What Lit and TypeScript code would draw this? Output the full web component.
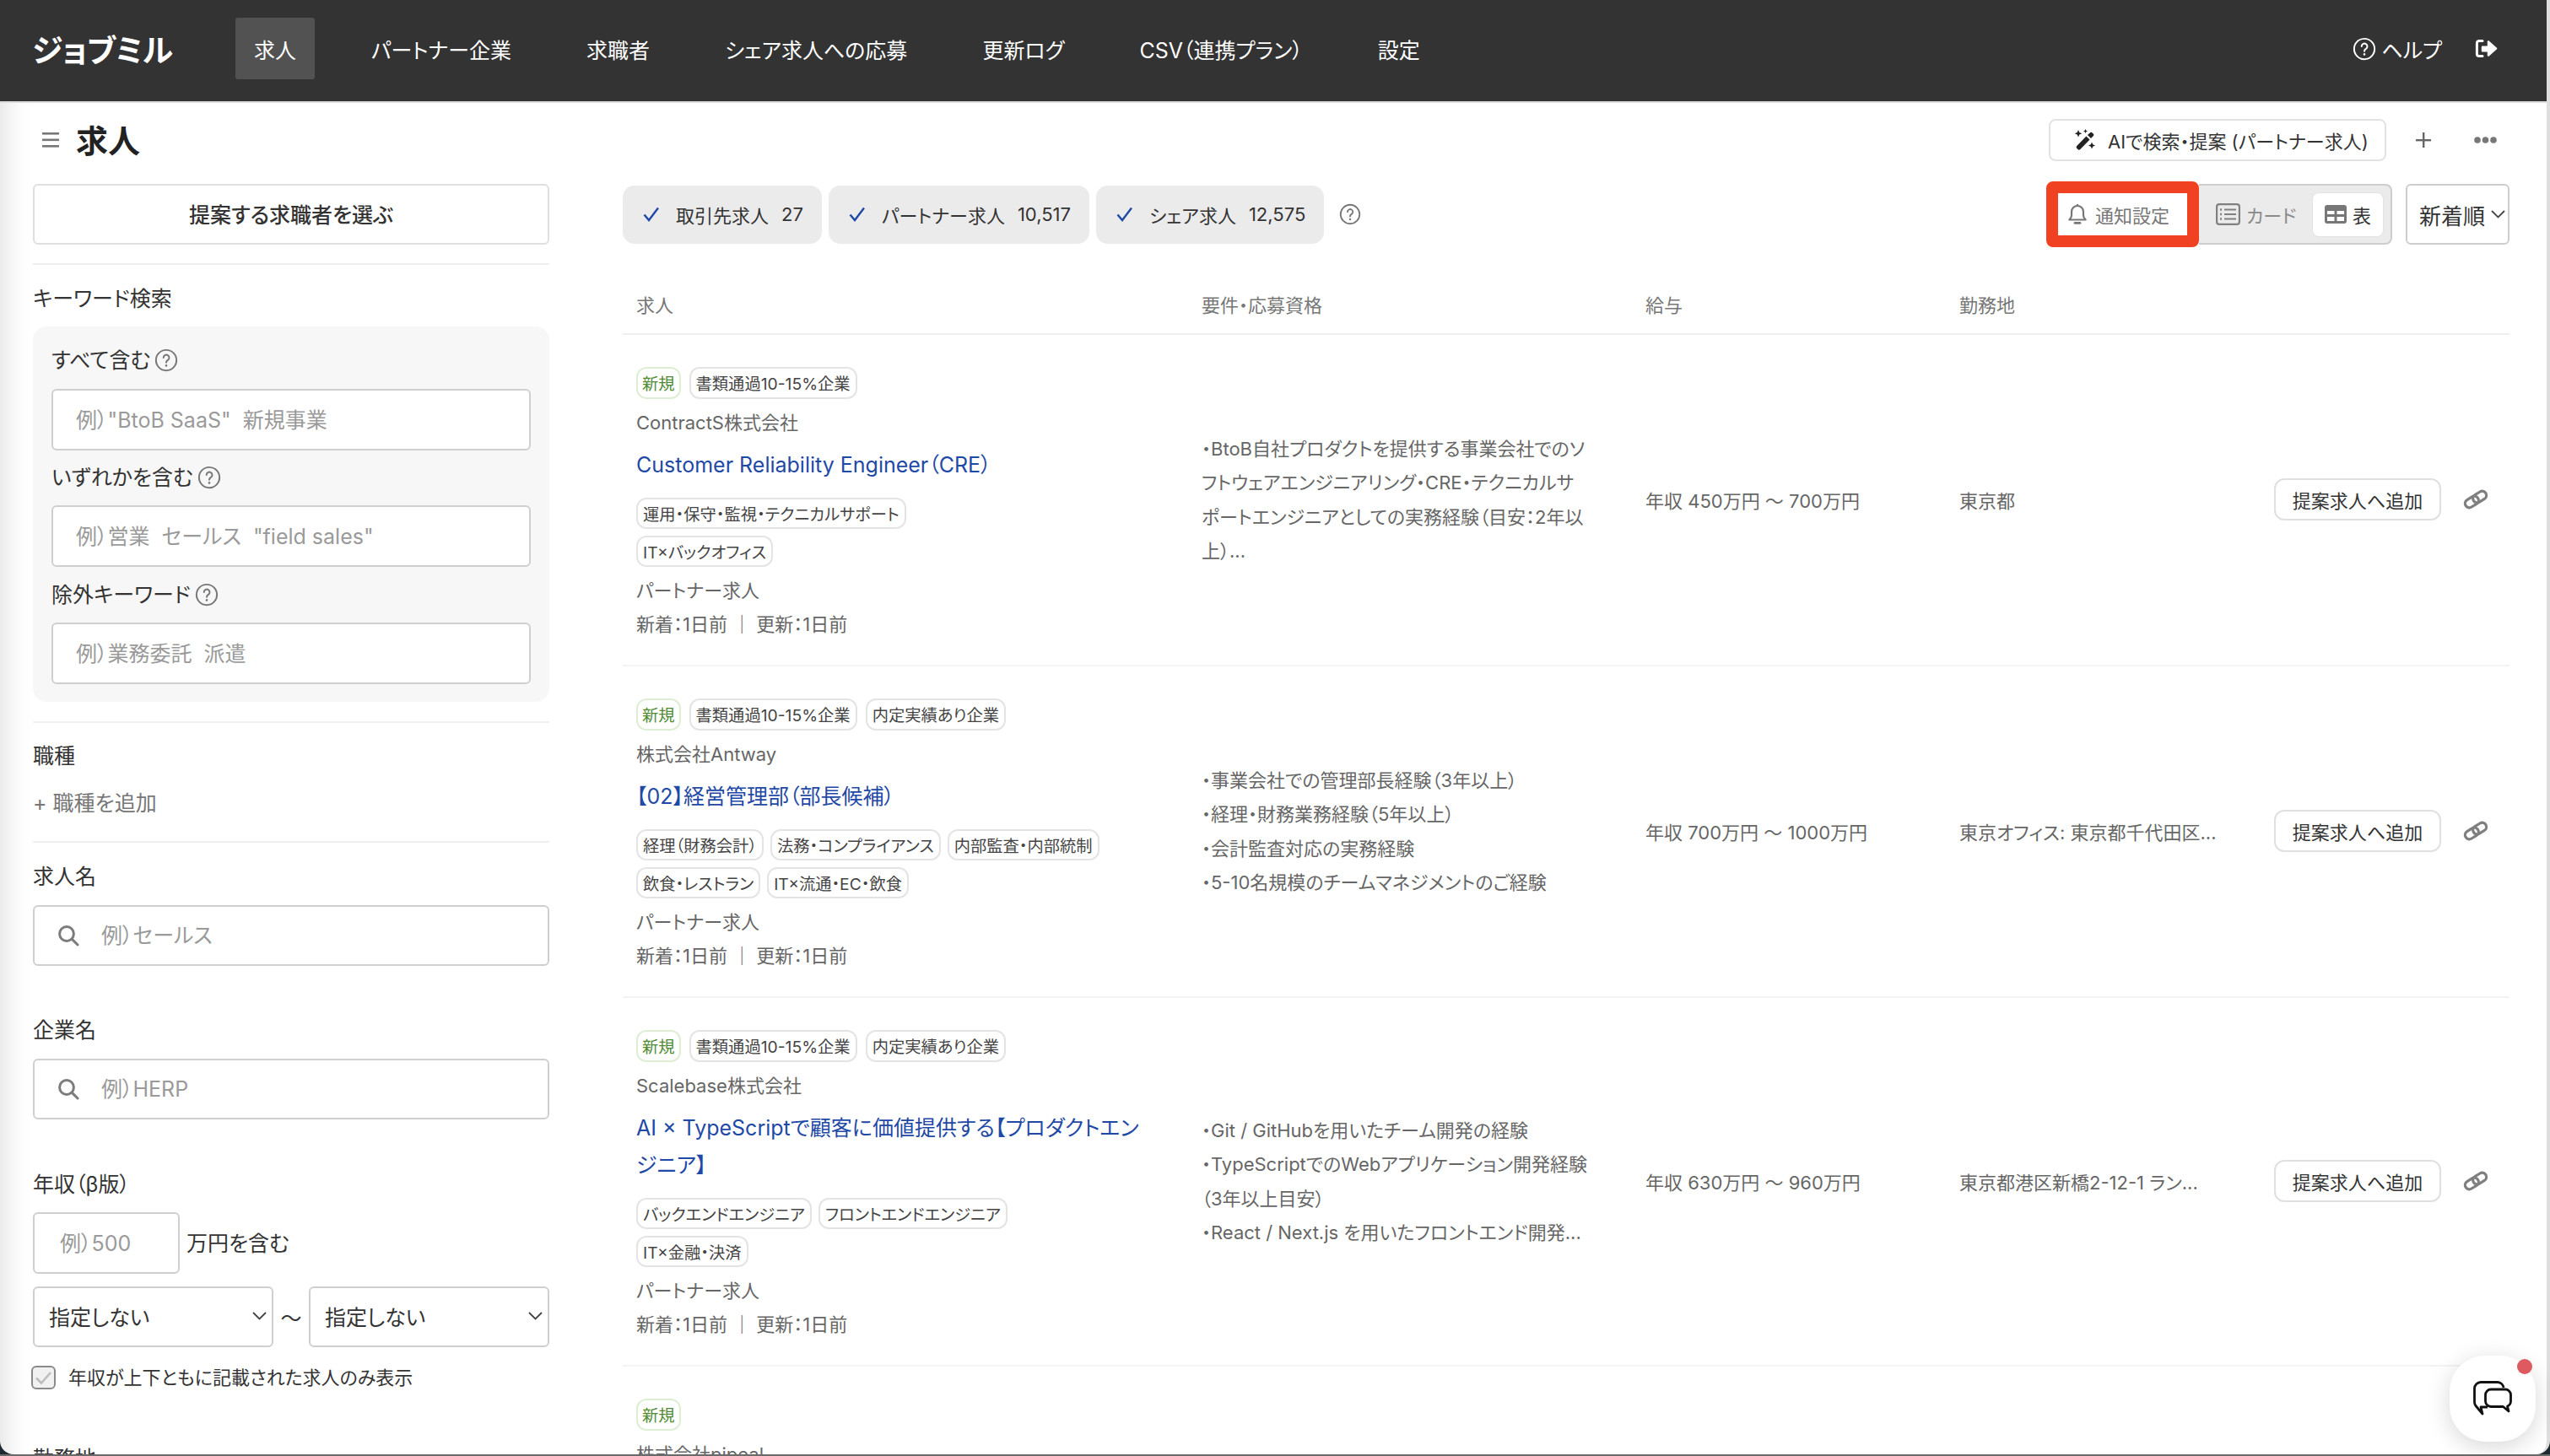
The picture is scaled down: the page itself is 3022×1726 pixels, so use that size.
import {LitElement, css, html} from 'lit';
import {customElement} from 'lit/decorators.js';

const help = (size: number, color = '#777') => html`<svg class="ico" width=${size} height=${size} viewBox="0 0 24 24" fill="none" stroke=${color} stroke-width="1.7" stroke-linecap="round"><circle cx="12" cy="12" r="10.4"/><path d="M9.2 9.4a2.9 2.9 0 1 1 4.4 2.5c-1 .6-1.6 1.2-1.6 2.4"/><path d="M12 17.4v.1" stroke-width="2.2"/></svg>`;
const check = html`<svg class="ico" width="20" height="18" viewBox="0 0 20 18" fill="none" stroke="#1f49a6" stroke-width="2.4"><path d="M1.5 9.5 7 16 18 1.5"/></svg>`;
const search = html`<svg class="ico" width="26" height="26" viewBox="0 0 26 26" fill="none" stroke="#7c7c7c" stroke-width="3" stroke-linecap="round"><circle cx="11" cy="11" r="8.4"/><path d="m17.4 17.4 6.6 6.6"/></svg>`;
const chevron = html`<svg class="ico" width="17" height="10" viewBox="0 0 17 10" fill="none" stroke="#444" stroke-width="1.8"><path d="m1 1 7.5 7.5L16 1"/></svg>`;
const link = html`<svg class="ico" width="32" height="24" viewBox="0 0 32 24" fill="none" stroke="#7f7f7f" stroke-width="3.2"><g transform="rotate(-32 16 12)"><rect x="2" y="7" width="17" height="10" rx="5"/><rect x="13" y="7" width="17" height="10" rx="5"/></g></svg>`;

type Job = {
  badges: string[];
  company: string;
  title: string[];
  tags: string[][];
  req: string[];
  salary: string;
  place: string;
};

const jobs: Job[] = [
  {
    badges: ['書類通過10-15%企業'],
    company: 'ContractS株式会社',
    title: ['Customer Reliability Engineer（CRE）'],
    tags: [['運用・保守・監視・テクニカルサポート'], ['IT×バックオフィス']],
    req: ['・BtoB自社プロダクトを提供する事業会社でのソ', 'フトウェアエンジニアリング・CRE・テクニカルサ', 'ポートエンジニアとしての実務経験（目安：2年以', '上）...'],
    salary: '年収 450万円 〜 700万円',
    place: '東京都',
  },
  {
    badges: ['書類通過10-15%企業', '内定実績あり企業'],
    company: '株式会社Antway',
    title: ['【02】経営管理部（部長候補）'],
    tags: [['経理（財務会計）', '法務・コンプライアンス', '内部監査・内部統制'], ['飲食・レストラン', 'IT×流通・EC・飲食']],
    req: ['・事業会社での管理部長経験（3年以上）', '・経理・財務業務経験（5年以上）', '・会計監査対応の実務経験', '・5-10名規模のチームマネジメントのご経験'],
    salary: '年収 700万円 〜 1000万円',
    place: '東京オフィス: 東京都千代田区...',
  },
  {
    badges: ['書類通過10-15%企業', '内定実績あり企業'],
    company: 'Scalebase株式会社',
    title: ['AI × TypeScriptで顧客に価値提供する【プロダクトエン', 'ジニア】'],
    tags: [['バックエンドエンジニア', 'フロントエンドエンジニア'], ['IT×金融・決済']],
    req: ['・Git / GitHubを用いたチーム開発の経験', '・TypeScriptでのWebアプリケーション開発経験', '（3年以上目安）', '・React / Next.js を用いたフロントエンド開発...'],
    salary: '年収 630万円 〜 960万円',
    place: '東京都港区新橋2-12-1 ラン...',
  },
];

@customElement('app-root')
export class AppRoot extends LitElement {
  static styles = css`
    :host {
      display: block;
      height: 1726px;
      overflow: hidden;
      position: relative;
      background: #1d2a30;
      color: #333;
      font-family: Inter, 'Noto Sans CJK JP', sans-serif;
      font-feature-settings: 'palt';
    }
    * { box-sizing: border-box; }
    .ico { display: block; flex: none; }

    .window {
      height: 1724px;
      background: linear-gradient(90deg, #ebebeb, #fbfbfb 22px, #fff 36px);
      border-right: 4px solid #dedede;
      border-radius: 0 0 16px 16px;
      overflow: hidden;
    }
    .strip { height: 2px; background: #6a6a6a; }

    .topbar {
      height: 122px;
      background: #333;
      border-bottom: 2px solid #dcdcdc;
      display: flex;
      align-items: center;
      padding: 0 58px 5px 38px;
      color: #fff;
    }
    .logo { font-size: 37px; font-weight: 700; width: 241px; letter-spacing: -0.5px; }
    .nav { display: flex; gap: 45px; flex: 1; }
    .nav-item {
      height: 73px;
      padding: 0 22px;
      display: flex;
      align-items: center;
      font-size: 25px;
      border-radius: 3px;
    }
    .nav-item.active { background: #525252; }
    .top-help { display: flex; align-items: center; gap: 6px; font-size: 25px; margin-right: 39px; }

    .titlebar {
      height: 88px;
      display: flex;
      align-items: center;
      padding: 0 59px 0 50px;
    }
    .title { font-size: 38px; font-weight: 700; color: #222; margin-left: 20px; flex: 1; padding-bottom: 3px; }
    .ai-btn {
      width: 400px;
      height: 50px;
      border: 2px solid #e2e2e2;
      border-radius: 8px;
      display: flex;
      align-items: center;
      gap: 14px;
      padding-left: 27px;
      font-size: 22px;
      background: #fff;
    }
    .plus { margin-left: 35px; }
    .dots { margin-left: 51px; }

    .columns { display: flex; padding: 8px 44px 0 39px; }

    .side { width: 612px; flex: none; margin-right: 87px; font-size: 25px; }
    .pick {
      height: 72px;
      border: 2px solid #dfdfdf;
      border-radius: 6px;
      background: #fff;
      display: flex;
      align-items: center;
      justify-content: center;
      font-weight: 500;
      font-size: 25px;
      padding-bottom: 2px;
    }
    hr { border: 0; height: 2px; background: #efefef; margin: 0; }
    .label { height: 34px; line-height: 34px; display: flex; align-items: center; gap: 5px; white-space: nowrap; }
    .panel {
      background: #f7f7f7;
      border-radius: 16px;
      padding: 23px 22px 21px;
      margin-top: 16px;
    }
    .field {
      display: flex;
      align-items: center;
      height: 73px;
      border: 2px solid #cfcfcf;
      border-radius: 6px;
      background: #fff;
      margin-top: 16px;
      padding: 0 27px;
      gap: 26px;
    }
    .field.short { height: 72px; margin-top: 17px; }
    .field input {
      border: 0;
      outline: 0;
      background: transparent;
      width: 100%;
      min-width: 0;
      padding: 0;
      font: inherit;
      font-feature-settings: inherit;
      color: #333;
    }
    .field input::placeholder { color: #9a9a9a; opacity: 1; }
    .add { color: #777; margin-top: 22px; }
    .money { display: flex; align-items: center; gap: 8px; margin-top: 16px; }
    .money .field { width: 174px; margin: 0; padding: 0 30px; }
    .money span { padding-bottom: 3px; }
    .range { display: flex; align-items: center; margin-top: 15px; font-size: 25px; }
    .select {
      flex: 1;
      height: 72px;
      border: 2px solid #cfcfcf;
      border-radius: 6px;
      background: #fff;
      display: flex;
      align-items: center;
      justify-content: space-between;
      padding: 0 6px 3px 17px;
    }
    .tilde { width: 42px; text-align: center; }
    .only {
      display: flex;
      align-items: center;
      gap: 15px;
      margin: 22px 0 0 -2px;
      font-size: 22px;
      line-height: 28px;
      height: 28px;
    }
    .box {
      width: 29px;
      height: 28px;
      border: 2px solid #8a8a8a;
      border-radius: 6px;
      background: #f1f1f1;
      display: flex;
      align-items: center;
      justify-content: center;
    }

    .main { flex: 1; min-width: 0; }
    .tools { display: flex; align-items: center; height: 72px; }
    .chips { display: flex; gap: 8px; flex: 1; align-items: center; }
    .chip {
      height: 69px;
      background: #ebebeb;
      border-radius: 14px;
      display: flex;
      align-items: center;
      padding: 0 22px 0 24px;
      font-size: 22px;
      white-space: nowrap;
    }
    .chip .name { margin: 0 15px 0 19px; }
    .chip-help { margin-left: 10px; }
    .notify {
      width: 181px;
      height: 78px;
      border: 14px solid #f04223;
      border-radius: 8px;
      background: #fff;
      display: flex;
      align-items: center;
      gap: 10px;
      padding-left: 12px;
      font-size: 22px;
      color: #777;
      position: relative;
      z-index: 1;
    }
    .segment {
      width: 229px;
      height: 72px;
      background: #ebebeb;
      border: 2px solid #cdcdcd;
      border-left: 0;
      border-radius: 0 8px 8px 0;
      display: flex;
      align-items: center;
      justify-content: space-between;
      padding: 0 8px 0 20px;
      font-size: 22px;
    }
    .seg-card { display: flex; align-items: center; gap: 7px; color: #8a8a8a; }
    .seg-table {
      width: 85px;
      height: 53px;
      background: #fff;
      border: 1px solid #e3e3e3;
      border-radius: 8px;
      display: flex;
      align-items: center;
      justify-content: center;
      gap: 7px;
    }
    .sort {
      width: 123px;
      height: 72px;
      margin-left: 16px;
      border: 2px solid #cdcdcd;
      border-radius: 6px;
      background: #fff;
      display: flex;
      align-items: center;
      padding-left: 14px;
      gap: 7px;
      font-size: 26px;
      white-space: nowrap;
    }

    .grid { display: grid; grid-template-columns: 686px 526px 372px 373px 279px; }
    .head {
      padding-top: 55px;
      padding-bottom: 16px;
      border-bottom: 2px solid #efefef;
      font-size: 22px;
      line-height: 34px;
      color: #777;
    }
    .head > div:first-child { padding-left: 16px; }

    .row { border-bottom: 2px solid #f3f3f3; align-items: center; font-size: 22px; color: #666; }
    .job { padding: 38px 0 31px 16px; }
    .pills { display: flex; gap: 10px; }
    .pills.tag-row { gap: 8px; }
    .pill {
      height: 38px;
      border: 2px solid #e4e4e4;
      border-radius: 12px;
      padding: 0 6px;
      display: flex;
      align-items: center;
      font-size: 19.3px;
      color: #444;
      white-space: nowrap;
      background: #fff;
    }
    .tag-row .pill { height: 37px; }
    .pill.new { border-color: #deeed4; color: #4f8a32; padding: 0 5px; }
    .tags { display: flex; flex-direction: column; gap: 8px; margin: 0 0 11px; }
    .line { height: 34px; line-height: 34px; white-space: nowrap; }
    .company { margin-top: 11px; }
    .job-title { margin: 11px 0 17px; color: #1f49a6; font-size: 25px; line-height: 44px; }
    .job-title div { white-space: nowrap; }
    .meta { margin-top: 6px; }
    .req div { line-height: 40.5px; white-space: nowrap; }
    .nowrap { white-space: nowrap; padding-bottom: 2px; }
    .actions { display: flex; align-items: center; gap: 25px; padding-bottom: 2px; }
    .add-btn {
      width: 198px;
      height: 50px;
      border: 2px solid #e0e0e0;
      border-radius: 12px;
      background: #fff;
      color: #333;
      display: flex;
      align-items: center;
      justify-content: center;
      white-space: nowrap;
    }
    .next { font-size: 22px; color: #666; }

    .chat {
      position: absolute;
      left: 2903px;
      top: 1607px;
      width: 102px;
      height: 102px;
      border-radius: 42px;
      background: #fff;
      box-shadow: 0 6px 28px rgba(0, 0, 0, 0.16);
      display: flex;
      align-items: center;
      justify-content: center;
    }
    .chat svg { margin: -2px 0 0 -1px; }
    .chat-dot {
      position: absolute;
      left: 80px;
      top: 4px;
      width: 18px;
      height: 18px;
      border-radius: 50%;
      background: #dc5a60;
    }
  `;

  private renderJob(job: Job) {
    return html`
      <div class="grid row">
        <div class="job">
          <div class="pills">
            <span class="pill new">新規</span>
            ${job.badges.map((b) => html`<span class="pill">${b}</span>`)}
          </div>
          <div class="line company">${job.company}</div>
          <div class="job-title">${job.title.map((t) => html`<div>${t}</div>`)}</div>
          <div class="tags">
            ${job.tags.map((r) => html`<div class="pills tag-row">${r.map((t) => html`<span class="pill">${t}</span>`)}</div>`)}
          </div>
          <div class="line">パートナー求人</div>
          <div class="line meta">新着：1日前 ｜ 更新：1日前</div>
        </div>
        <div class="req">${job.req.map((l) => html`<div>${l}</div>`)}</div>
        <div class="nowrap">${job.salary}</div>
        <div class="nowrap">${job.place}</div>
        <div class="actions"><span class="add-btn">提案求人へ追加</span>${link}</div>
      </div>
    `;
  }

  render() {
    return html`
      <div class="window">
        <header class="topbar">
          <div class="logo">ジョブミル</div>
          <nav class="nav">
            <span class="nav-item active">求人</span>
            <span class="nav-item">パートナー企業</span>
            <span class="nav-item">求職者</span>
            <span class="nav-item">シェア求人への応募</span>
            <span class="nav-item">更新ログ</span>
            <span class="nav-item">CSV（連携プラン）</span>
            <span class="nav-item">設定</span>
          </nav>
          <div class="top-help">${help(28, '#fff')}<span>ヘルプ</span></div>
          <svg class="ico" width="27" height="23" viewBox="0 0 27 23" fill="#fff"><path d="M9 2.4H5A2.6 2.6 0 0 0 2.4 5v13A2.6 2.6 0 0 0 5 20.6h4" fill="none" stroke="#fff" stroke-width="3" stroke-linecap="round"/><path d="M15.5 2.2a1.2 1.2 0 0 1 1.3.3l9.2 8.2a1.1 1.1 0 0 1 0 1.6l-9.2 8.2a1.2 1.2 0 0 1-2-.9v-4.2H9a1.2 1.2 0 0 1-1.2-1.2V9.8A1.2 1.2 0 0 1 9 8.6h5.8V3.3c0-.5.3-.9.7-1.1z"/></svg>
        </header>

        <div class="titlebar">
          <svg class="ico" width="20" height="18" viewBox="0 0 20 18" fill="#777"><rect width="20" height="2.6" y="0"/><rect width="20" height="2.6" y="7.5"/><rect width="20" height="2.6" y="15"/></svg>
          <div class="title">求人</div>
          <div class="ai-btn">
            <svg class="ico" width="27" height="26" viewBox="0 0 27 26" fill="#222"><path d="M19.8 4.4a2 2 0 0 1 2.8 0l1.1 1a2 2 0 0 1 0 2.9L21 11 16.9 7zM15.4 8.5l4.1 4L8.3 23.9a2 2 0 0 1-2.9 0l-1.2-1.2a2 2 0 0 1 0-2.8z"/><path d="m6 1 1.3 3L10.300 5.300 7.300 6.600 6 9.600 4.700 6.600 1.700 5.300 4.700 4zM14.500 0l.8 1.700 1.700.8-1.700.8-.8 1.700-.8-1.700-1.700-.8 1.700-.8zM22 15.500l1.200 2.800 2.800 1.200-2.800 1.200L22 23.500l-1.200-2.800-2.800-1.200 2.800-1.200z"/></svg>
            <span>AIで検索・提案 (パートナー求人)</span>
          </div>
          <svg class="ico plus" width="18" height="18" viewBox="0 0 18 18" fill="#666"><rect x="8" width="2.4" height="18"/><rect y="8" width="18" height="2.4"/></svg>
          <svg class="ico dots" width="27" height="8" viewBox="0 0 27 8" fill="#777"><circle cx="4" cy="4" r="3.800"/><circle cx="13.500" cy="4" r="3.800"/><circle cx="23" cy="4" r="3.800"/></svg>
        </div>

        <div class="columns">
          <aside class="side">
            <div class="pick">提案する求職者を選ぶ</div>
            <hr style="margin-top:22px" />
            <div class="label" style="margin-top:23px">キーワード検索</div>
            <div class="panel">
              <div class="label">すべて含む ${help(28)}</div>
              <div class="field" style="margin-top:17px"><input placeholder='例）"BtoB SaaS"  新規事業' /></div>
              <div class="label" style="margin-top:15px">いずれかを含む ${help(28)}</div>
              <div class="field"><input placeholder='例）営業  セールス  "field sales"' /></div>
              <div class="label" style="margin-top:16px">除外キーワード ${help(28)}</div>
              <div class="field"><input placeholder="例）業務委託  派遣" /></div>
            </div>
            <hr style="margin-top:23px" />
            <div class="label" style="margin-top:22px">職種</div>
            <div class="label add">+ 職種を追加</div>
            <hr style="margin-top:28px" />
            <div class="label" style="margin-top:23px">求人名</div>
            <div class="field short">${search}<input placeholder="例）セールス" /></div>
            <div class="label" style="margin-top:59px">企業名</div>
            <div class="field short">${search}<input placeholder="例）HERP" /></div>
            <div class="label" style="margin-top:60px">年収（β版）</div>
            <div class="money">
              <div class="field"><input placeholder="例）500" /></div>
              <span>万円を含む</span>
            </div>
            <div class="range">
              <div class="select"><span>指定しない</span>${chevron}</div>
              <div class="tilde">〜</div>
              <div class="select"><span>指定しない</span>${chevron}</div>
            </div>
            <div class="only">
              <span class="box"><svg class="ico" width="21" height="17" viewBox="0 0 21 17" fill="none" stroke="#bdbdbd" stroke-width="2.600"><path d="m2 8.500 6 6L19 2"/></svg></span>
              <span>年収が上下ともに記載された求人のみ表示</span>
            </div>
            <div class="label" style="margin-top:65px">勤務地</div>
          </aside>

          <main class="main">
            <div class="tools">
              <div class="chips">
                <div class="chip">${check}<span class="name">取引先求人</span><span>27</span></div>
                <div class="chip">${check}<span class="name">パートナー求人</span><span>10,517</span></div>
                <div class="chip">${check}<span class="name">シェア求人</span><span>12,575</span></div>
                <span class="chip-help">${help(26)}</span>
              </div>
              <div class="notify">
                <svg class="ico" width="22" height="26" viewBox="0 0 22 26" fill="none" stroke="#777" stroke-width="2.200" stroke-linejoin="round"><path d="M11 3a7 7 0 0 0-7 7v4.500c0 2-1.200 3.500-2.600 5h19.200c-1.400-1.500-2.600-3-2.600-5V10a7 7 0 0 0-7-7z"/><path d="M11 1v2"/><path d="M8 23.300h6" stroke-linecap="round" stroke-width="2.800"/></svg>
                <span>通知設定</span>
              </div>
              <div class="segment">
                <div class="seg-card">
                  <svg class="ico" width="29" height="26" viewBox="0 0 29 26" fill="none" stroke="#808080" stroke-width="2.200"><rect x="1.100" y="1.100" width="26.800" height="23.800" rx="3"/><path d="M10 7.500h14M10 13h14M10 18.500h14"/><path d="M5 7.500h2M5 13h2M5 18.500h2" stroke-width="2.600"/></svg>
                  <span>カード</span>
                </div>
                <div class="seg-table">
                  <svg class="ico" width="26" height="22" viewBox="0 0 26 22" fill="#777"><path fill-rule="evenodd" d="M3 0h20a3 3 0 0 1 3 3v16a3 3 0 0 1-3 3H3a3 3 0 0 1-3-3V3a3 3 0 0 1 3-3zM3 7v4h8.500V7zm11.500 0v4H23V7zM3 14v5h8.500v-5zm11.500 0v5H23v-5z"/></svg>
                  <span>表</span>
                </div>
              </div>
              <div class="sort"><span>新着順</span>${chevron}</div>
            </div>

            <div class="grid head">
              <div>求人</div>
              <div>要件・応募資格</div>
              <div>給与</div>
              <div>勤務地</div>
              <div></div>
            </div>
            ${jobs.map((j) => this.renderJob(j))}
            <div class="job next">
              <div class="pills"><span class="pill new">新規</span></div>
              <div class="line company">株式会社pipeal</div>
            </div>
          </main>
        </div>
      </div>
      <div class="strip"></div>

      <div class="chat">
        <svg class="ico" width="46" height="41" viewBox="0 0 46 41" fill="none" stroke="#111" stroke-width="2.800" stroke-linejoin="round">
          <path d="M17 31H9l2 8-8-9.500A8 8 0 0 1 1.500 25V9A7.500 7.500 0 0 1 9 1.500h20A7.500 7.500 0 0 1 36 8"/>
          <path d="M21 10h17a6.500 6.500 0 0 1 6.500 6.500V24a6.500 6.500 0 0 1-4 6l1.500 6-6.500-5.500H21A6.500 6.500 0 0 1 14.500 24v-7.500A6.500 6.500 0 0 1 21 10z"/>
        </svg>
        <span class="chat-dot"></span>
      </div>
    `;
  }
}
